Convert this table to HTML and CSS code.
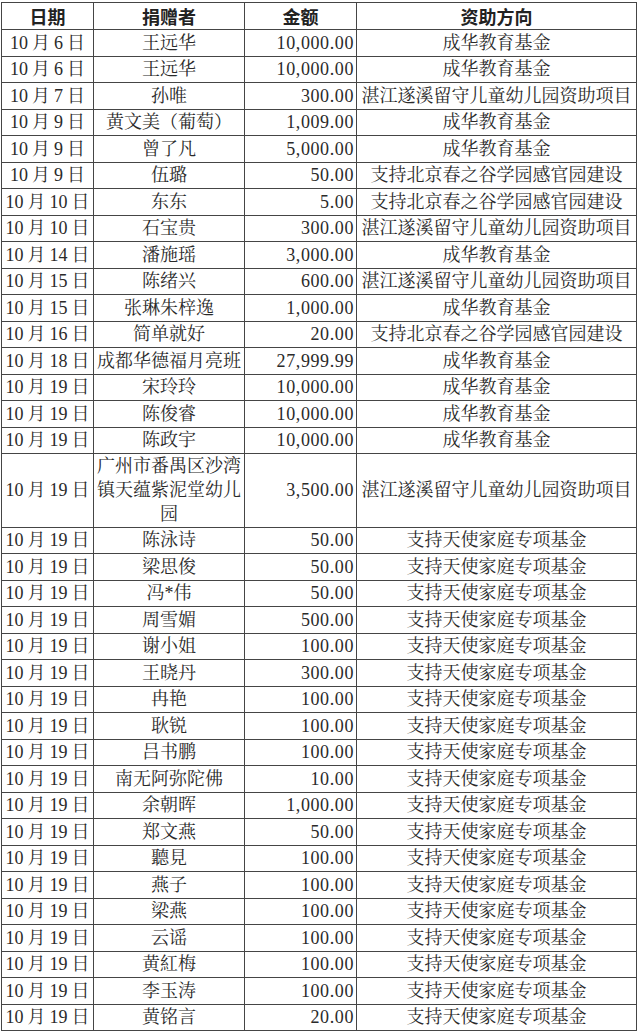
FILE: index.html
```html
<!DOCTYPE html>
<html lang="zh-CN">
<head>
<meta charset="utf-8">
<title>捐赠明细</title>
<link rel="stylesheet" href="styles.css">
</head>
<body>
<div class="table">
  <div class="c h">日期</div><div class="c h">捐赠者</div><div class="c h">金额</div><div class="c h">资助方向</div>

  <div class="c d">10 月 6 日</div><div class="c n">王远华</div><div class="c a">10,000.00</div><div class="c f">成华教育基金</div>
  <div class="c d">10 月 6 日</div><div class="c n">王远华</div><div class="c a">10,000.00</div><div class="c f">成华教育基金</div>
  <div class="c d">10 月 7 日</div><div class="c n">孙唯</div><div class="c a">300.00</div><div class="c f">湛江遂溪留守儿童幼儿园资助项目</div>
  <div class="c d">10 月 9 日</div><div class="c n">黄文美（葡萄）</div><div class="c a">1,009.00</div><div class="c f">成华教育基金</div>
  <div class="c d">10 月 9 日</div><div class="c n">曾了凡</div><div class="c a">5,000.00</div><div class="c f">成华教育基金</div>
  <div class="c d">10 月 9 日</div><div class="c n">伍璐</div><div class="c a">50.00</div><div class="c f">支持北京春之谷学园感官园建设</div>
  <div class="c d">10 月 10 日</div><div class="c n">东东</div><div class="c a">5.00</div><div class="c f">支持北京春之谷学园感官园建设</div>
  <div class="c d">10 月 10 日</div><div class="c n">石宝贵</div><div class="c a">300.00</div><div class="c f">湛江遂溪留守儿童幼儿园资助项目</div>
  <div class="c d">10 月 14 日</div><div class="c n">潘施瑶</div><div class="c a">3,000.00</div><div class="c f">成华教育基金</div>
  <div class="c d">10 月 15 日</div><div class="c n">陈绪兴</div><div class="c a">600.00</div><div class="c f">湛江遂溪留守儿童幼儿园资助项目</div>
  <div class="c d">10 月 15 日</div><div class="c n">张琳朱梓逸</div><div class="c a">1,000.00</div><div class="c f">成华教育基金</div>
  <div class="c d">10 月 16 日</div><div class="c n">简单就好</div><div class="c a">20.00</div><div class="c f">支持北京春之谷学园感官园建设</div>
  <div class="c d">10 月 18 日</div><div class="c n">成都华德福月亮班</div><div class="c a">27,999.99</div><div class="c f">成华教育基金</div>
  <div class="c d">10 月 19 日</div><div class="c n">宋玲玲</div><div class="c a">10,000.00</div><div class="c f">成华教育基金</div>
  <div class="c d">10 月 19 日</div><div class="c n">陈俊睿</div><div class="c a">10,000.00</div><div class="c f">成华教育基金</div>
  <div class="c d">10 月 19 日</div><div class="c n">陈政宇</div><div class="c a">10,000.00</div><div class="c f">成华教育基金</div>
  <div class="c d">10 月 19 日</div><div class="c n">广州市番禺区沙湾镇天蕴紫泥堂幼儿园</div><div class="c a">3,500.00</div><div class="c f">湛江遂溪留守儿童幼儿园资助项目</div>
  <div class="c d">10 月 19 日</div><div class="c n">陈泳诗</div><div class="c a">50.00</div><div class="c f">支持天使家庭专项基金</div>
  <div class="c d">10 月 19 日</div><div class="c n">梁思俊</div><div class="c a">50.00</div><div class="c f">支持天使家庭专项基金</div>
  <div class="c d">10 月 19 日</div><div class="c n">冯*伟</div><div class="c a">50.00</div><div class="c f">支持天使家庭专项基金</div>
  <div class="c d">10 月 19 日</div><div class="c n">周雪媚</div><div class="c a">500.00</div><div class="c f">支持天使家庭专项基金</div>
  <div class="c d">10 月 19 日</div><div class="c n">谢小姐</div><div class="c a">100.00</div><div class="c f">支持天使家庭专项基金</div>
  <div class="c d">10 月 19 日</div><div class="c n">王晓丹</div><div class="c a">300.00</div><div class="c f">支持天使家庭专项基金</div>
  <div class="c d">10 月 19 日</div><div class="c n">冉艳</div><div class="c a">100.00</div><div class="c f">支持天使家庭专项基金</div>
  <div class="c d">10 月 19 日</div><div class="c n">耿锐</div><div class="c a">100.00</div><div class="c f">支持天使家庭专项基金</div>
  <div class="c d">10 月 19 日</div><div class="c n">吕书鹏</div><div class="c a">100.00</div><div class="c f">支持天使家庭专项基金</div>
  <div class="c d">10 月 19 日</div><div class="c n">南无阿弥陀佛</div><div class="c a">10.00</div><div class="c f">支持天使家庭专项基金</div>
  <div class="c d">10 月 19 日</div><div class="c n">余朝晖</div><div class="c a">1,000.00</div><div class="c f">支持天使家庭专项基金</div>
  <div class="c d">10 月 19 日</div><div class="c n">郑文燕</div><div class="c a">50.00</div><div class="c f">支持天使家庭专项基金</div>
  <div class="c d">10 月 19 日</div><div class="c n">聽見</div><div class="c a">100.00</div><div class="c f">支持天使家庭专项基金</div>
  <div class="c d">10 月 19 日</div><div class="c n">燕子</div><div class="c a">100.00</div><div class="c f">支持天使家庭专项基金</div>
  <div class="c d">10 月 19 日</div><div class="c n">梁燕</div><div class="c a">100.00</div><div class="c f">支持天使家庭专项基金</div>
  <div class="c d">10 月 19 日</div><div class="c n">云谣</div><div class="c a">100.00</div><div class="c f">支持天使家庭专项基金</div>
  <div class="c d">10 月 19 日</div><div class="c n">黄紅梅</div><div class="c a">100.00</div><div class="c f">支持天使家庭专项基金</div>
  <div class="c d">10 月 19 日</div><div class="c n">李玉涛</div><div class="c a">100.00</div><div class="c f">支持天使家庭专项基金</div>
  <div class="c d">10 月 19 日</div><div class="c n">黄铭言</div><div class="c a">20.00</div><div class="c f">支持天使家庭专项基金</div>
</div>
</body>
</html>
```

FILE: styles.css
```css
html, body {
  margin: 0;
  padding: 0;
  background: #ffffff;
}

body {
  padding: 2px 0 0 1px;
  font-family: "Liberation Serif", "Noto Serif CJK SC", "Noto Sans CJK SC", serif;
  font-size: 18px;
  color: #2a2a2a;
}

.table {
  display: grid;
  grid-template-columns: 92px 151px 112px 280px;
  grid-template-rows: 27px repeat(16, 26.5px) 73.5px;
  grid-auto-rows: 26.5px;
  width: 635px;
  border-left: 1px solid #454545;
  border-top: 1px solid #454545;
}

.c {
  display: flex;
  align-items: center;
  justify-content: center;
  text-align: center;
  border-right: 1px solid #454545;
  border-bottom: 1px solid #454545;
  line-height: 24px;
  white-space: nowrap;
  overflow: hidden;
}

.h {
  font-family: "Noto Sans CJK SC", sans-serif;
  font-weight: 600;
  color: #222;
}

.d {
  word-spacing: -0.5px;
}

.n {
  padding: 0 3px;
  white-space: normal;
}

.a {
  justify-content: flex-end;
  padding-right: 2px;
  letter-spacing: 0.6px;
}

.f {
  padding: 0 2px;
}
```
